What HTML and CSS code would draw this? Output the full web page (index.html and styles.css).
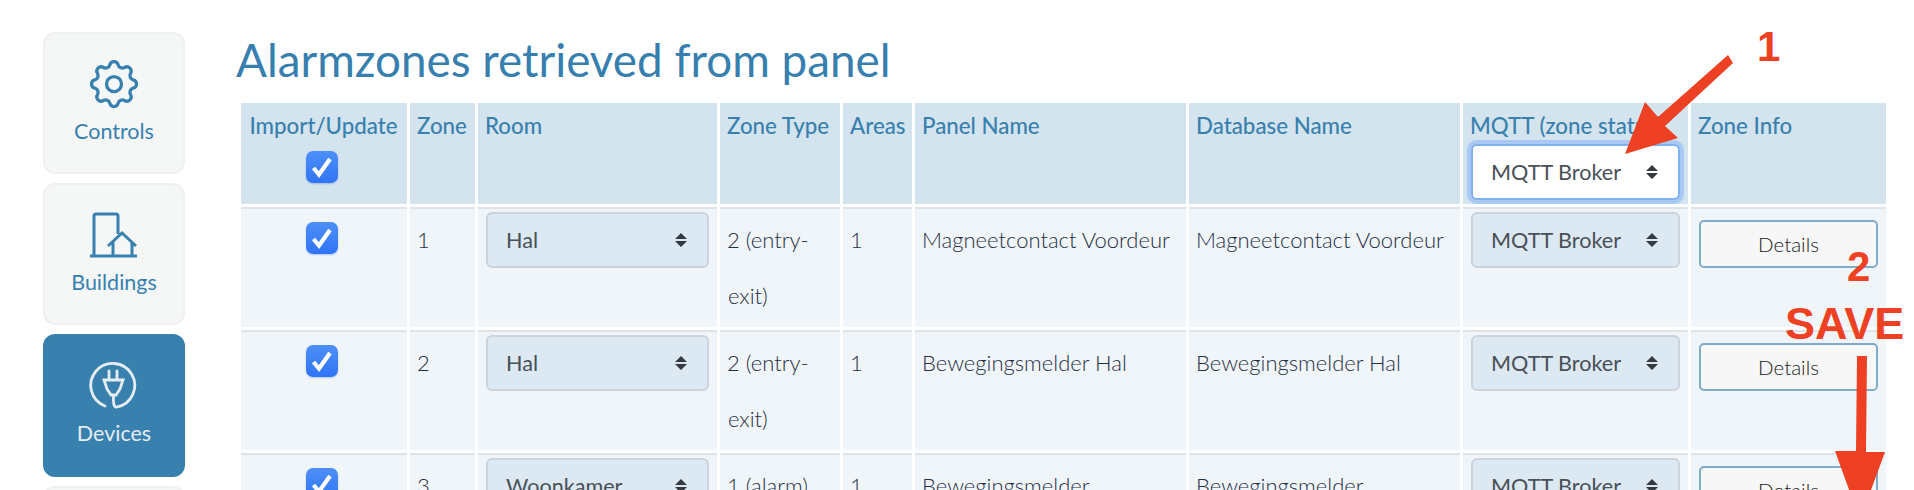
FILE: index.html
```html
<!DOCTYPE html>
<html lang="en">
<head>
    <meta charset="UTF-8">
    <meta name="viewport" content="width=device-width, initial-scale=1.0">
    <title>Alarmzones</title>
    <link rel="stylesheet" href="styles.css">
</head>
<body>
    <div class="page">
        <nav class="sidebar">
            <a class="nav-card">
                <svg class="nav-icon" viewBox="0 0 24 24" width="60" height="60" fill="none" stroke="currentColor" stroke-width="1.3">
                    <path d="M10.325 4.317c.426-1.756 2.924-1.756 3.35 0a1.724 1.724 0 0 0 2.573 1.066c1.543-.94 3.31.826 2.37 2.37a1.724 1.724 0 0 0 1.065 2.572c1.756.426 1.756 2.924 0 3.35a1.724 1.724 0 0 0-1.066 2.573c.94 1.543-.826 3.31-2.37 2.37a1.724 1.724 0 0 0-2.572 1.065c-.426 1.756-2.924 1.756-3.35 0a1.724 1.724 0 0 0-2.573-1.066c-1.543.94-3.31-.826-2.37-2.37a1.724 1.724 0 0 0-1.065-2.572c-1.756-.426-1.756-2.924 0-3.35a1.724 1.724 0 0 0 1.066-2.573c-.94-1.543.826-3.31 2.37-2.37c1 .608 2.296.07 2.572-1.065z"/>
                    <circle cx="12" cy="12" r="3"/>
                </svg>
                <span>Controls</span>
            </a>
            <a class="nav-card">
                <svg class="nav-icon" viewBox="0 0 60 60" width="60" height="60" fill="none" stroke="currentColor" stroke-width="3">
                    <path d="M6 51H53M10 51V11Q10 9 12 9H32Q34 9 34 11V29M24 41L38 28L52 41M29 37V51M48 37V51"/>
                </svg>
                <span>Buildings</span>
            </a>
            <a class="nav-card active">
                <svg class="nav-icon" viewBox="0 0 60 60" width="60" height="60" fill="none" stroke="currentColor" stroke-width="2.8" stroke-linecap="round">
                    <path d="M21 50A22 22 0 1 1 33 51C30 52 29 47 29.500 40"/>
                    <path d="M25 15V24M33 15V24M20 24H39L36 33L32 39H27L23 33Z"/>
                </svg>
                <span>Devices</span>
            </a>
            <a class="nav-card"></a>
        </nav>

        <main class="content">
            <h1>Alarmzones retrieved from panel</h1>
            <table class="zones">
                <colgroup>
                    <col class="col-import">
                    <col class="col-zone">
                    <col class="col-room">
                    <col class="col-type">
                    <col class="col-areas">
                    <col class="col-name">
                    <col class="col-name">
                    <col class="col-mqtt">
                    <col class="col-info">
                </colgroup>
                <thead>
                    <tr>
                        <th class="center">Import/Update<span class="check"><svg viewBox="0 0 32 32"><path d="M7.500 17L13 23.500L24 8"/></svg></span></th>
                        <th>Zone</th>
                        <th>Room</th>
                        <th>Zone Type</th>
                        <th>Areas</th>
                        <th>Panel Name</th>
                        <th>Database Name</th>
                        <th>MQTT (zone status)<select class="picker focused"><option>MQTT Broker</option></select></th>
                        <th>Zone Info</th>
                    </tr>
                </thead>
                <tbody>
                    <tr>
                        <td class="center"><span class="check"><svg viewBox="0 0 32 32"><path d="M7.500 17L13 23.500L24 8"/></svg></span></td>
                        <td>1</td>
                        <td><select class="picker"><option>Hal</option></select></td>
                        <td>2 (entry-exit)</td>
                        <td>1</td>
                        <td>Magneetcontact Voordeur</td>
                        <td>Magneetcontact Voordeur</td>
                        <td><select class="picker"><option>MQTT Broker</option></select></td>
                        <td><button class="details">Details</button></td>
                    </tr>
                    <tr>
                        <td class="center"><span class="check"><svg viewBox="0 0 32 32"><path d="M7.500 17L13 23.500L24 8"/></svg></span></td>
                        <td>2</td>
                        <td><select class="picker"><option>Hal</option></select></td>
                        <td>2 (entry-exit)</td>
                        <td>1</td>
                        <td>Bewegingsmelder Hal</td>
                        <td>Bewegingsmelder Hal</td>
                        <td><select class="picker"><option>MQTT Broker</option></select></td>
                        <td><button class="details">Details</button></td>
                    </tr>
                    <tr>
                        <td class="center"><span class="check"><svg viewBox="0 0 32 32"><path d="M7.500 17L13 23.500L24 8"/></svg></span></td>
                        <td>3</td>
                        <td><select class="picker"><option>Woonkamer</option></select></td>
                        <td>1 (alarm)</td>
                        <td>1</td>
                        <td>Bewegingsmelder</td>
                        <td>Bewegingsmelder</td>
                        <td><select class="picker"><option>MQTT Broker</option></select></td>
                        <td><button class="details">Details</button></td>
                    </tr>
                </tbody>
            </table>
        </main>
    </div>

    <!-- annotations drawn on top of the screenshot -->
    <svg class="arrows" width="1914" height="490" viewBox="0 0 1914 490">
        <path class="arrow" d="M1728 55L1733 63L1665 126L1678 138L1625 154L1645 102L1658 117Z"/>
        <path class="arrow" d="M1857 356H1867L1866 452H1885L1860 520L1835 451H1856Z"/>
    </svg>
    <span class="note note-one">1</span>
    <span class="note note-two">2</span>
    <span class="note note-save">SAVE</span>
</body>
</html>
```

FILE: styles.css
```css
html, body {
    margin: 0;
    padding: 0;
    height: 490px;
    overflow: hidden;
    background-color: #fff;
}

body {
    font-family: 'Lato', 'Noto Sans', sans-serif;
    color: #1f3044;
}

.page {
    display: flex;
    align-items: flex-start;
    width: 1914px;
    height: 490px;
    overflow: hidden;
}

.sidebar {
    display: flex;
    flex-direction: column;
    gap: 9px;
    width: 142px;
    margin: 32px 53px 0 43px;
}

.nav-card {
    display: flex;
    flex-direction: column;
    align-items: center;
    box-sizing: border-box;
    height: 142px;
    padding-top: 20px;
    background-color: #f5f7f7;
    border: 2px solid #eff1f1;
    border-radius: 12px;
    color: #3880ae;
    font-size: 21.500px;
}

.nav-card span {
    margin-top: 4px;
}

.nav-card.active {
    height: 143px;
    background-color: #3880ae;
    border-color: #3880ae;
    color: #e6edf2;
}

.content {
    flex: 1;
}

h1 {
    margin: 29px 0 10px -2px;
    height: 61px;
    font-size: 45.800px;
    font-weight: 400;
    line-height: 61px;
    color: #377fae;
}

.zones {
    border-collapse: separate;
    border-spacing: 3px;
    table-layout: fixed;
    width: 1651px;
}

.col-import { width: 166px; }
.col-zone { width: 65px; }
.col-room { width: 239px; }
.col-type { width: 120px; }
.col-areas { width: 69px; }
.col-name { width: 271px; }
.col-mqtt { width: 225px; }
.col-info { width: 195px; }

th, td {
    box-sizing: border-box;
    padding: 3px 8px;
    text-align: left;
    text-indent: -1px;
    vertical-align: top;
}

th {
    height: 101px;
    padding: 7px 8px 0;
    background-color: #d4e4ef;
    color: #3880ae;
    font-size: 22.300px;
    font-weight: 500;
    line-height: 32px;
    white-space: nowrap;
}

td {
    height: 120px;
    background-color: #f0f5fa;
    border-top: 2px solid #dde3e9;
    font-size: 22px;
    font-weight: 300;
    line-height: 56px;
}

.center {
    text-align: center;
}

.check {
    display: block;
    width: 32px;
    height: 32px;
    margin: 9px 0 0 57px;
    background: linear-gradient(#4d8ff8, #2f74f5);
    border-radius: 7px;
    box-shadow: 0 1px 2px rgba(60, 110, 200, 0.35);
}

td .check {
    margin-top: 10px;
}

.check svg {
    display: block;
    width: 32px;
    height: 32px;
    fill: none;
    stroke: #fff;
    stroke-width: 4.200;
}

.picker {
    display: block;
    box-sizing: border-box;
    width: 100%;
    height: 56px;
    padding: 0 18px;
    appearance: none;
    background-color: #dce8f2;
    background-image: url("data:image/svg+xml,%3Csvg xmlns='http://www.w3.org/2000/svg' width='12' height='14'%3E%3Cpath fill='%23343a40' d='M6 0l6 6H0zM0 8h12l-6 6z'/%3E%3C/svg%3E");
    background-repeat: no-repeat;
    background-position: right 20px center;
    border: 2px solid #ccd3da;
    border-radius: 6px;
    color: #495057;
    font-family: inherit;
    font-size: 21.600px;
}

.picker.focused {
    margin-top: 2px;
    background-color: #fff;
    border-color: #80b2f2;
    box-shadow: 0 0 0 4px #a9c8f3;
}

.details {
    display: block;
    width: 100%;
    height: 48px;
    margin-top: 8px;
    background-color: #f7f7f7;
    border: 2px solid #7facc9;
    border-radius: 5px;
    color: #222;
    font-family: inherit;
    font-size: 20.500px;
    font-weight: 300;
}

.arrows {
    position: absolute;
    left: 0;
    top: 0;
}

.arrow {
    fill: #ee4023;
}

.note {
    position: absolute;
    color: #ee4023;
    font-family: 'Liberation Sans', Arial, sans-serif;
    font-weight: 700;
    line-height: 1;
}

.note-one {
    left: 1757px;
    top: 26px;
    font-size: 42px;
}

.note-two {
    left: 1847px;
    top: 246px;
    font-size: 42px;
}

.note-save {
    left: 1785px;
    top: 301px;
    font-size: 45px;
}
```
